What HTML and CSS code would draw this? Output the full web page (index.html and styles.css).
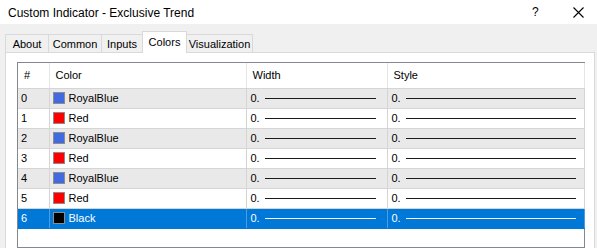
FILE: index.html
```html
<!DOCTYPE html>
<html lang="en">
<head>
  <meta charset="UTF-8" />
  <title>Custom Indicator - Exclusive Trend</title>
  <link rel="stylesheet" href="styles.css">
</head>
<body>
  <div class="window">
    <div class="titlebar">
      <span class="title">Custom Indicator - Exclusive Trend</span>
      <span class="help">?</span>
      <span class="close">
        <svg width="11" height="11" viewBox="0 0 11 11">
          <path d="M0.5 0.5 L10.5 10.5 M10.5 0.5 L0.5 10.5" stroke="#000" stroke-width="1.1" fill="none" />
        </svg>
      </span>
    </div>

    <div class="tabs">
      <div class="tab tab-about">About</div>
      <div class="tab tab-common">Common</div>
      <div class="tab tab-inputs">Inputs</div>
      <div class="tab tab-colors active">Colors</div>
      <div class="tab tab-vis">Visualization</div>
    </div>

    <div class="panel">
      <div class="list">
        <table class="grid">
          <colgroup>
            <col class="c-num">
            <col class="c-color">
            <col class="c-width">
            <col class="c-style">
          </colgroup>
          <thead>
            <tr>
              <th>#</th>
              <th>Color</th>
              <th>Width</th>
              <th>Style</th>
            </tr>
          </thead>
          <tbody>
            <tr class="even">
              <td>0</td>
              <td><span class="swatch blue"></span>RoyalBlue</td>
              <td><div class="val">0.<span class="line w"></span></div></td>
              <td><div class="val">0.<span class="line s"></span></div></td>
            </tr>
            <tr>
              <td>1</td>
              <td><span class="swatch red"></span>Red</td>
              <td><div class="val">0.<span class="line w"></span></div></td>
              <td><div class="val">0.<span class="line s"></span></div></td>
            </tr>
            <tr class="even">
              <td>2</td>
              <td><span class="swatch blue"></span>RoyalBlue</td>
              <td><div class="val">0.<span class="line w"></span></div></td>
              <td><div class="val">0.<span class="line s"></span></div></td>
            </tr>
            <tr>
              <td>3</td>
              <td><span class="swatch red"></span>Red</td>
              <td><div class="val">0.<span class="line w"></span></div></td>
              <td><div class="val">0.<span class="line s"></span></div></td>
            </tr>
            <tr class="even">
              <td>4</td>
              <td><span class="swatch blue"></span>RoyalBlue</td>
              <td><div class="val">0.<span class="line w"></span></div></td>
              <td><div class="val">0.<span class="line s"></span></div></td>
            </tr>
            <tr>
              <td>5</td>
              <td><span class="swatch red"></span>Red</td>
              <td><div class="val">0.<span class="line w"></span></div></td>
              <td><div class="val">0.<span class="line s"></span></div></td>
            </tr>
            <tr class="selected">
              <td>6</td>
              <td><span class="swatch black"></span>Black</td>
              <td><div class="val">0.<span class="line w"></span></div></td>
              <td><div class="val">0.<span class="line s"></span></div></td>
            </tr>
          </tbody>
        </table>
      </div>
    </div>
  </div>
</body>
</html>
```

FILE: styles.css
```css
* {
  margin: 0;
  padding: 0;
  box-sizing: border-box;
}

html, body {
  width: 597px;
  height: 248px;
  overflow: hidden;
}

body {
  font-family: 'Liberation Sans', Arial, sans-serif;
  background: #f0f0f0;
  color: #000;
}

.window {
  display: flex;
  flex-direction: column;
  height: 248px;
}

.titlebar {
  height: 24px;
  background: #ffffff;
  display: flex;
  align-items: center;
  padding-left: 8px;
  flex-shrink: 0;
}

.title {
  font-size: 12px;
  padding-top: 1px;
}

.help {
  margin-left: auto;
  font-size: 12px;
  width: 12px;
  margin-right: 29px;
}

.close {
  display: flex;
  margin-right: 13px;
  margin-top: 1px;
}

.tabs {
  height: 28px;
  display: flex;
  align-items: flex-end;
  padding-left: 5px;
  flex-shrink: 0;
}

.tab {
  height: 18px;
  border: 1px solid #d9d9d9;
  border-bottom: none;
  border-right: none;
  background: #f0f0f0;
  font-size: 11px;
  display: flex;
  align-items: center;
  justify-content: center;
  padding-top: 1px;
}

.tab-vis {
  border-right: 1px solid #d9d9d9;
}

.tab-about { width: 43px; }
.tab-common { width: 53px; }
.tab-inputs { width: 41px; }
.tab-colors { width: 45px; }
.tab-vis { width: 66px; }

.tab.active {
  height: 22px;
  background: #ffffff;
  margin-bottom: -1px;
  border-right: 1px solid #d9d9d9;
  padding-bottom: 3px;
  z-index: 1;
}

.tab.active + .tab {
  border-left: none;
}

.panel {
  flex: 1;
  margin: 0 2px 0 5px;
  background: #ffffff;
  border: 1px solid #d9d9d9;
  border-bottom: none;
  padding: 9px 9px 0 11px;
}

.list {
  width: 568px;
  height: 186px;
  border: 1px solid #828790;
  background: #ffffff;
}

.grid {
  width: 566px;
  border-collapse: collapse;
  table-layout: fixed;
  font-size: 11px;
}

.c-num { width: 31px; }
.c-color { width: 197px; }
.c-width { width: 141px; }
.c-style { width: 197px; }

.grid th {
  height: 25px;
  text-align: left;
  font-weight: normal;
  padding-left: 6px;
  border-right: 1px solid #e5e5e5;
  border-bottom: 1px solid #d5d5d5;
}

.grid td {
  height: 20px;
  padding: 0 0 0 3px;
  border-right: 1px solid #d5d5d5;
  border-bottom: 1px solid #d5d5d5;
  white-space: nowrap;
  vertical-align: middle;
}

.grid td:nth-child(2) {
  padding-left: 3px;
}

.grid td:nth-child(n+3) {
  padding-left: 4px;
}

.grid tr.even td {
  background: #e9e9e9;
}

.grid tr.selected td {
  background: #0078d7;
  color: #ffffff;
  border-right-color: #4d9be0;
  border-bottom-color: #0078d7;
}

.swatch {
  display: inline-block;
  width: 12px;
  height: 12px;
  border: 1px solid #8c8c8c;
  vertical-align: -2px;
  margin-right: 4px;
}

.swatch.blue { background: #4169e1; }
.swatch.red { background: #ff0000; }
.swatch.black { background: #000000; }

.val {
  display: flex;
  align-items: center;
}

.line {
  flex: 1;
  height: 1px;
  background: #1a1a1a;
  margin-left: 5px;
  margin-top: 1px;
}

.line.w { margin-right: 11px; }
.line.s { margin-right: 8px; }

.selected .line {
  background: #ffffff;
}
```
